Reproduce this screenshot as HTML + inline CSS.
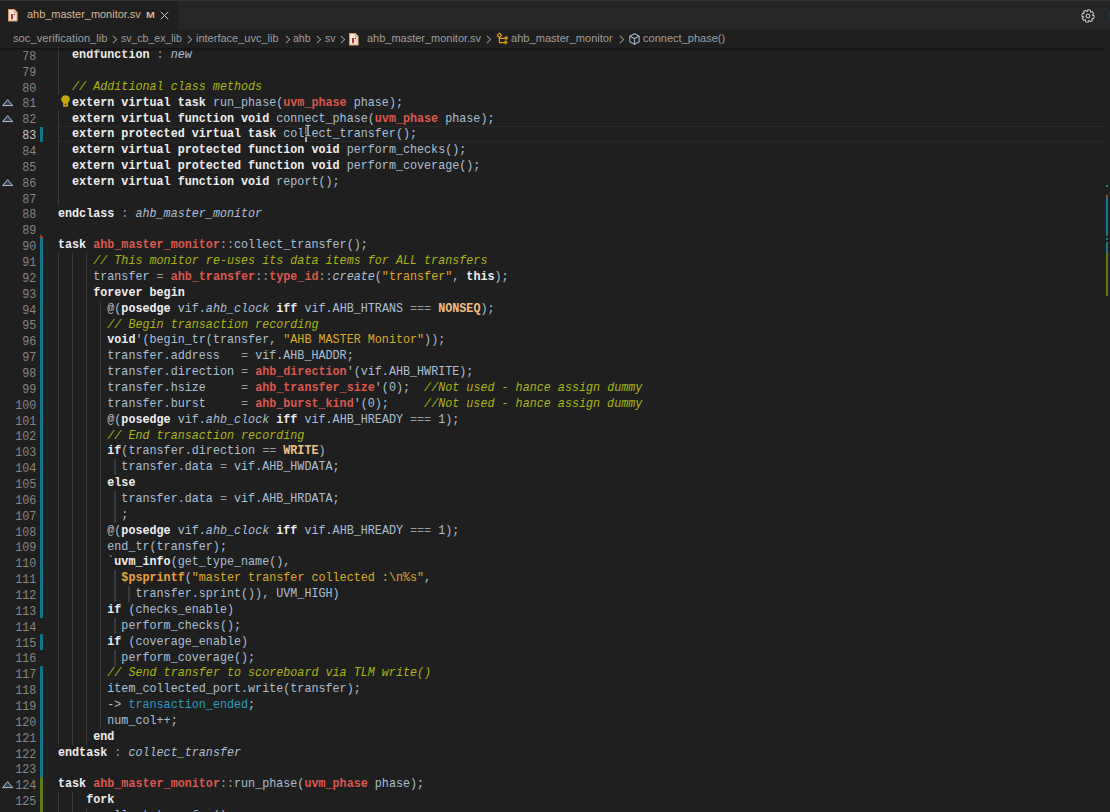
<!DOCTYPE html>
<html><head><meta charset="utf-8"><style>
*{margin:0;padding:0;box-sizing:border-box}
html,body{width:1110px;height:812px;overflow:hidden;background:#1f1f1f}
body{position:relative;font-family:"Liberation Sans",sans-serif}
.a{position:absolute}
svg{display:block}
#tabs{left:0;top:0;width:1110px;height:29.85px;background:#262626}
#tabtop{left:0;top:0;width:1110px;height:1.2px;background:#333333}
#tab{left:0;top:1.2px;width:177.9px;height:28.65px;background:#1f1f1f}
.ui{font-family:"Liberation Sans",sans-serif;font-size:11.2px;line-height:14px;height:14px;white-space:pre}
.tt{color:#dcb68c}
.bc{color:#9e9e9e}
#bcbar{left:0;top:29.85px;width:1110px;height:17.95px;background:#1f1f1f}
#shadow{left:0;top:47.8px;width:1105px;height:4.5px;background:linear-gradient(#121212,rgba(18,18,18,0.55) 35%,rgba(31,31,31,0))}
.ln{left:0;width:39.6px;text-align:right;transform-origin:0 0;transform:scaleX(0.9167);font-family:"Liberation Mono",monospace;font-size:12.8px;color:#858585;line-height:15.855px;height:15.855px;white-space:pre}
.cl{left:58px;transform-origin:0 0;transform:scaleX(0.9167);font-family:"Liberation Mono",monospace;font-size:12.8px;line-height:15.855px;height:15.855px;white-space:pre;color:#abbfd4}
.k{color:#eeeeee;font-weight:bold}
.t{color:#d9584c;font-weight:bold}
.c{color:#a8b514;font-style:italic}
.s{color:#dcab24}
.n{color:#efc086;font-weight:bold}
.f{color:#e9a23b;font-weight:bold}
.e{color:#2a9cbd}
.o{color:#9b9b9b}
.it{font-style:italic}
.g{width:1.2px;background:#3a3a3a}
.bar{left:39.9px;width:3.2px;background:#12738d}
.grn{left:39.9px;width:3.2px;background:#5e7a17}
.ov{left:1106.2px;width:2.2px}
</style></head><body>

<div class="a" id="tabs"></div><div class="a" id="tabtop"></div><div class="a" id="tab"></div>
<div class="a " style="left:8.1px;top:8.9px;width:10px;height:13px"><svg width="10" height="13" viewBox="0 0 10 13"><path d="M0.55 0.55 H6.3 L9.1 3.35 V12.0 H0.55 Z" fill="#f1e9d9" stroke="#d69b62" stroke-width="1.05"/><path d="M6.2 0.7 V3.4 H9.0" fill="#e7c9a0" stroke="#d69b62" stroke-width="0.7"/><path d="M2.9 5.0 L4.8 5.0 L5.1 10.2 L3.1 10.2 Z" fill="#b8262b"/><circle cx="6.4" cy="5.6" r="0.75" fill="#b8262b"/><path d="M4.6 8.6 L6.2 7.0" stroke="#c89a80" stroke-width="0.6"/></svg></div>
<div class="a ui tt" style="left:26.5px;top:7.3px;transform-origin:0 0;transform:scaleX(0.9786)">ahb_master_monitor.sv</div>
<div class="a ui tt" style="left:145.6px;top:8.0px;font-size:9.8px;font-weight:bold;transform-origin:0 0;transform:scaleX(1.08)">M</div>
<div class="a " style="left:160px;top:11.2px;width:9px;height:9px"><svg width="9" height="9" viewBox="0 0 9 9"><path d="M0.8 0.8 L8.2 8.2 M8.2 0.8 L0.8 8.2" stroke="#c6c6c6" stroke-width="1.0"/></svg></div>
<div class="a " style="left:1079.7px;top:7.5px;width:16px;height:16px;transform:rotate(11deg)"><svg width="16" height="16" viewBox="-8 -8 16 16"><g fill="none" stroke="#c5c5c5" stroke-width="1.0" stroke-linejoin="round"><path d="M4.31,-1.62 L6.05,-1.35 L6.05,1.35 L4.31,1.62 L4.19,1.90 L5.24,3.32 L3.32,5.24 L1.90,4.19 L1.62,4.31 L1.35,6.05 L-1.35,6.05 L-1.62,4.31 L-1.90,4.19 L-3.32,5.24 L-5.24,3.32 L-4.19,1.90 L-4.31,1.62 L-6.05,1.35 L-6.05,-1.35 L-4.31,-1.62 L-4.19,-1.90 L-5.24,-3.32 L-3.32,-5.24 L-1.90,-4.19 L-1.62,-4.31 L-1.35,-6.05 L1.35,-6.05 L1.62,-4.31 L1.90,-4.19 L3.32,-5.24 L5.24,-3.32 L4.19,-1.90 Z"/><circle cx="0" cy="0" r="1.9"/></g></svg></div>
<div class="a " style="left:1108.8px;top:11px;width:1.2px;height:9px;background:#203848"></div>
<div class="a" id="bcbar"></div>
<div class="a ui bc" style="left:13.0px;top:31.45px;transform-origin:0 0;transform:scaleX(1.0000)">soc_verification_lib</div>
<div class="a ui bc" style="left:120.8px;top:31.45px;transform-origin:0 0;transform:scaleX(0.9400)">sv_cb_ex_lib</div>
<div class="a ui bc" style="left:196.2px;top:31.45px;transform-origin:0 0;transform:scaleX(0.9833)">interface_uvc_lib</div>
<div class="a ui bc" style="left:292.9px;top:31.45px;transform-origin:0 0;transform:scaleX(0.9368)">ahb</div>
<div class="a ui bc" style="left:324.5px;top:31.45px;transform-origin:0 0;transform:scaleX(0.9273)">sv</div>
<div class="a ui bc" style="left:366.8px;top:31.45px;transform-origin:0 0;transform:scaleX(0.9812)">ahb_master_monitor.sv</div>
<div class="a ui bc" style="left:510.8px;top:31.45px;transform-origin:0 0;transform:scaleX(0.9913)">ahb_master_monitor</div>
<div class="a ui bc" style="left:643.1px;top:31.45px;transform-origin:0 0;transform:scaleX(0.9855)">connect_phase()</div>
<div class="a " style="left:112.2px;top:34.5px;width:6px;height:9px"><svg width="6" height="9" viewBox="0 0 6 9"><path d="M0.9 0.8 L4.6 4.5 L0.9 8.2" fill="none" stroke="#959595" stroke-width="1.05"/></svg></div>
<div class="a " style="left:186.6px;top:34.5px;width:6px;height:9px"><svg width="6" height="9" viewBox="0 0 6 9"><path d="M0.9 0.8 L4.6 4.5 L0.9 8.2" fill="none" stroke="#959595" stroke-width="1.05"/></svg></div>
<div class="a " style="left:284.6px;top:34.5px;width:6px;height:9px"><svg width="6" height="9" viewBox="0 0 6 9"><path d="M0.9 0.8 L4.6 4.5 L0.9 8.2" fill="none" stroke="#959595" stroke-width="1.05"/></svg></div>
<div class="a " style="left:315.8px;top:34.5px;width:6px;height:9px"><svg width="6" height="9" viewBox="0 0 6 9"><path d="M0.9 0.8 L4.6 4.5 L0.9 8.2" fill="none" stroke="#959595" stroke-width="1.05"/></svg></div>
<div class="a " style="left:339.8px;top:34.5px;width:6px;height:9px"><svg width="6" height="9" viewBox="0 0 6 9"><path d="M0.9 0.8 L4.6 4.5 L0.9 8.2" fill="none" stroke="#959595" stroke-width="1.05"/></svg></div>
<div class="a " style="left:486.0px;top:34.5px;width:6px;height:9px"><svg width="6" height="9" viewBox="0 0 6 9"><path d="M0.9 0.8 L4.6 4.5 L0.9 8.2" fill="none" stroke="#959595" stroke-width="1.05"/></svg></div>
<div class="a " style="left:618.6px;top:34.5px;width:6px;height:9px"><svg width="6" height="9" viewBox="0 0 6 9"><path d="M0.9 0.8 L4.6 4.5 L0.9 8.2" fill="none" stroke="#959595" stroke-width="1.05"/></svg></div>
<div class="a " style="left:348.6px;top:32.6px;width:10px;height:13px"><svg width="10" height="13" viewBox="0 0 10 13"><path d="M0.55 0.55 H6.3 L9.1 3.35 V12.0 H0.55 Z" fill="#f1e9d9" stroke="#d69b62" stroke-width="1.05"/><path d="M6.2 0.7 V3.4 H9.0" fill="#e7c9a0" stroke="#d69b62" stroke-width="0.7"/><path d="M2.9 5.0 L4.8 5.0 L5.1 10.2 L3.1 10.2 Z" fill="#b8262b"/><circle cx="6.4" cy="5.6" r="0.75" fill="#b8262b"/><path d="M4.6 8.6 L6.2 7.0" stroke="#c89a80" stroke-width="0.6"/></svg></div>
<div class="a " style="left:492px;top:30px;width:16px;height:16px"><svg width="16" height="16" viewBox="0 0 16 16"><g fill="none" stroke="#e3a00f" stroke-width="1.15" stroke-linejoin="round"><path d="M7.5 3.2 L9.6 5.3 L7.4 7.5 L5.2 5.6 Z"/><path d="M7.4 7.5 V12.6 H12.6 M7.9 8.3 H13.0"/><path d="M14.2 6.6 L15.6 7.9 L14.2 9.3 L12.8 7.9 Z"/><path d="M13.7 11.0 L15.1 12.4 L13.7 13.8 L12.3 12.4 Z"/></g></svg></div>
<div class="a " style="left:628.9px;top:33.0px;width:11px;height:12px"><svg width="11" height="12" viewBox="0 0 11 12"><g fill="none" stroke="#a3b2c6" stroke-width="1.1" stroke-linejoin="round"><path d="M5.5 0.8 L10.2 3.2 L10.2 8.8 L5.5 11.2 L0.8 8.8 L0.8 3.2 Z"/><path d="M0.8 3.2 L5.5 5.6 L10.2 3.2 M5.5 5.6 L5.5 11.2"/></g></svg></div>
<div class="a " style="left:58.5px;top:126.48px;width:1046.5px;height:15.86px;border-top:1.67px solid #282828;border-bottom:1.67px solid #282828"></div>
<div class="a g" style="left:58.00px;top:47.20px;height:15.96px"></div>
<div class="a g" style="left:58.00px;top:63.06px;height:15.96px"></div>
<div class="a g" style="left:58.00px;top:78.91px;height:15.96px"></div>
<div class="a g" style="left:58.00px;top:110.62px;height:15.96px"></div>
<div class="a g" style="left:58.00px;top:126.48px;height:15.96px"></div>
<div class="a g" style="left:58.00px;top:142.33px;height:15.96px"></div>
<div class="a g" style="left:58.00px;top:158.19px;height:15.96px"></div>
<div class="a g" style="left:58.00px;top:174.04px;height:15.96px"></div>
<div class="a g" style="left:58.00px;top:189.89px;height:15.96px"></div>
<div class="a g" style="left:58.00px;top:253.31px;height:15.96px"></div>
<div class="a g" style="left:72.08px;top:253.31px;height:15.96px"></div>
<div class="a g" style="left:86.16px;top:253.31px;height:15.96px"></div>
<div class="a g" style="left:58.00px;top:269.17px;height:15.96px"></div>
<div class="a g" style="left:72.08px;top:269.17px;height:15.96px"></div>
<div class="a g" style="left:86.16px;top:269.17px;height:15.96px"></div>
<div class="a g" style="left:58.00px;top:285.03px;height:15.96px"></div>
<div class="a g" style="left:72.08px;top:285.03px;height:15.96px"></div>
<div class="a g" style="left:86.16px;top:285.03px;height:15.96px"></div>
<div class="a g" style="left:58.00px;top:300.88px;height:15.96px"></div>
<div class="a g" style="left:72.08px;top:300.88px;height:15.96px"></div>
<div class="a g" style="left:86.16px;top:300.88px;height:15.96px"></div>
<div class="a g" style="left:100.24px;top:300.88px;height:15.96px"></div>
<div class="a g" style="left:58.00px;top:316.74px;height:15.96px"></div>
<div class="a g" style="left:72.08px;top:316.74px;height:15.96px"></div>
<div class="a g" style="left:86.16px;top:316.74px;height:15.96px"></div>
<div class="a g" style="left:100.24px;top:316.74px;height:15.96px"></div>
<div class="a g" style="left:58.00px;top:332.59px;height:15.96px"></div>
<div class="a g" style="left:72.08px;top:332.59px;height:15.96px"></div>
<div class="a g" style="left:86.16px;top:332.59px;height:15.96px"></div>
<div class="a g" style="left:100.24px;top:332.59px;height:15.96px"></div>
<div class="a g" style="left:58.00px;top:348.44px;height:15.96px"></div>
<div class="a g" style="left:72.08px;top:348.44px;height:15.96px"></div>
<div class="a g" style="left:86.16px;top:348.44px;height:15.96px"></div>
<div class="a g" style="left:100.24px;top:348.44px;height:15.96px"></div>
<div class="a g" style="left:58.00px;top:364.30px;height:15.96px"></div>
<div class="a g" style="left:72.08px;top:364.30px;height:15.96px"></div>
<div class="a g" style="left:86.16px;top:364.30px;height:15.96px"></div>
<div class="a g" style="left:100.24px;top:364.30px;height:15.96px"></div>
<div class="a g" style="left:58.00px;top:380.15px;height:15.96px"></div>
<div class="a g" style="left:72.08px;top:380.15px;height:15.96px"></div>
<div class="a g" style="left:86.16px;top:380.15px;height:15.96px"></div>
<div class="a g" style="left:100.24px;top:380.15px;height:15.96px"></div>
<div class="a g" style="left:58.00px;top:396.01px;height:15.96px"></div>
<div class="a g" style="left:72.08px;top:396.01px;height:15.96px"></div>
<div class="a g" style="left:86.16px;top:396.01px;height:15.96px"></div>
<div class="a g" style="left:100.24px;top:396.01px;height:15.96px"></div>
<div class="a g" style="left:58.00px;top:411.87px;height:15.96px"></div>
<div class="a g" style="left:72.08px;top:411.87px;height:15.96px"></div>
<div class="a g" style="left:86.16px;top:411.87px;height:15.96px"></div>
<div class="a g" style="left:100.24px;top:411.87px;height:15.96px"></div>
<div class="a g" style="left:58.00px;top:427.72px;height:15.96px"></div>
<div class="a g" style="left:72.08px;top:427.72px;height:15.96px"></div>
<div class="a g" style="left:86.16px;top:427.72px;height:15.96px"></div>
<div class="a g" style="left:100.24px;top:427.72px;height:15.96px"></div>
<div class="a g" style="left:58.00px;top:443.57px;height:15.96px"></div>
<div class="a g" style="left:72.08px;top:443.57px;height:15.96px"></div>
<div class="a g" style="left:86.16px;top:443.57px;height:15.96px"></div>
<div class="a g" style="left:100.24px;top:443.57px;height:15.96px"></div>
<div class="a g" style="left:58.00px;top:459.43px;height:15.96px"></div>
<div class="a g" style="left:72.08px;top:459.43px;height:15.96px"></div>
<div class="a g" style="left:86.16px;top:459.43px;height:15.96px"></div>
<div class="a g" style="left:100.24px;top:459.43px;height:15.96px"></div>
<div class="a g" style="left:114.32px;top:459.43px;height:15.96px"></div>
<div class="a g" style="left:58.00px;top:475.29px;height:15.96px"></div>
<div class="a g" style="left:72.08px;top:475.29px;height:15.96px"></div>
<div class="a g" style="left:86.16px;top:475.29px;height:15.96px"></div>
<div class="a g" style="left:100.24px;top:475.29px;height:15.96px"></div>
<div class="a g" style="left:58.00px;top:491.14px;height:15.96px"></div>
<div class="a g" style="left:72.08px;top:491.14px;height:15.96px"></div>
<div class="a g" style="left:86.16px;top:491.14px;height:15.96px"></div>
<div class="a g" style="left:100.24px;top:491.14px;height:15.96px"></div>
<div class="a g" style="left:114.32px;top:491.14px;height:15.96px"></div>
<div class="a g" style="left:58.00px;top:507.00px;height:15.96px"></div>
<div class="a g" style="left:72.08px;top:507.00px;height:15.96px"></div>
<div class="a g" style="left:86.16px;top:507.00px;height:15.96px"></div>
<div class="a g" style="left:100.24px;top:507.00px;height:15.96px"></div>
<div class="a g" style="left:114.32px;top:507.00px;height:15.96px"></div>
<div class="a g" style="left:58.00px;top:522.85px;height:15.96px"></div>
<div class="a g" style="left:72.08px;top:522.85px;height:15.96px"></div>
<div class="a g" style="left:86.16px;top:522.85px;height:15.96px"></div>
<div class="a g" style="left:100.24px;top:522.85px;height:15.96px"></div>
<div class="a g" style="left:58.00px;top:538.71px;height:15.96px"></div>
<div class="a g" style="left:72.08px;top:538.71px;height:15.96px"></div>
<div class="a g" style="left:86.16px;top:538.71px;height:15.96px"></div>
<div class="a g" style="left:100.24px;top:538.71px;height:15.96px"></div>
<div class="a g" style="left:58.00px;top:554.56px;height:15.96px"></div>
<div class="a g" style="left:72.08px;top:554.56px;height:15.96px"></div>
<div class="a g" style="left:86.16px;top:554.56px;height:15.96px"></div>
<div class="a g" style="left:100.24px;top:554.56px;height:15.96px"></div>
<div class="a g" style="left:58.00px;top:570.42px;height:15.96px"></div>
<div class="a g" style="left:72.08px;top:570.42px;height:15.96px"></div>
<div class="a g" style="left:86.16px;top:570.42px;height:15.96px"></div>
<div class="a g" style="left:100.24px;top:570.42px;height:15.96px"></div>
<div class="a g" style="left:114.32px;top:570.42px;height:15.96px"></div>
<div class="a g" style="left:58.00px;top:586.27px;height:15.96px"></div>
<div class="a g" style="left:72.08px;top:586.27px;height:15.96px"></div>
<div class="a g" style="left:86.16px;top:586.27px;height:15.96px"></div>
<div class="a g" style="left:100.24px;top:586.27px;height:15.96px"></div>
<div class="a g" style="left:114.32px;top:586.27px;height:15.96px"></div>
<div class="a g" style="left:128.40px;top:586.27px;height:15.96px"></div>
<div class="a g" style="left:58.00px;top:602.13px;height:15.96px"></div>
<div class="a g" style="left:72.08px;top:602.13px;height:15.96px"></div>
<div class="a g" style="left:86.16px;top:602.13px;height:15.96px"></div>
<div class="a g" style="left:100.24px;top:602.13px;height:15.96px"></div>
<div class="a g" style="left:58.00px;top:617.98px;height:15.96px"></div>
<div class="a g" style="left:72.08px;top:617.98px;height:15.96px"></div>
<div class="a g" style="left:86.16px;top:617.98px;height:15.96px"></div>
<div class="a g" style="left:100.24px;top:617.98px;height:15.96px"></div>
<div class="a g" style="left:114.32px;top:617.98px;height:15.96px"></div>
<div class="a g" style="left:58.00px;top:633.84px;height:15.96px"></div>
<div class="a g" style="left:72.08px;top:633.84px;height:15.96px"></div>
<div class="a g" style="left:86.16px;top:633.84px;height:15.96px"></div>
<div class="a g" style="left:100.24px;top:633.84px;height:15.96px"></div>
<div class="a g" style="left:58.00px;top:649.69px;height:15.96px"></div>
<div class="a g" style="left:72.08px;top:649.69px;height:15.96px"></div>
<div class="a g" style="left:86.16px;top:649.69px;height:15.96px"></div>
<div class="a g" style="left:100.24px;top:649.69px;height:15.96px"></div>
<div class="a g" style="left:114.32px;top:649.69px;height:15.96px"></div>
<div class="a g" style="left:58.00px;top:665.55px;height:15.96px"></div>
<div class="a g" style="left:72.08px;top:665.55px;height:15.96px"></div>
<div class="a g" style="left:86.16px;top:665.55px;height:15.96px"></div>
<div class="a g" style="left:100.24px;top:665.55px;height:15.96px"></div>
<div class="a g" style="left:58.00px;top:681.40px;height:15.96px"></div>
<div class="a g" style="left:72.08px;top:681.40px;height:15.96px"></div>
<div class="a g" style="left:86.16px;top:681.40px;height:15.96px"></div>
<div class="a g" style="left:100.24px;top:681.40px;height:15.96px"></div>
<div class="a g" style="left:58.00px;top:697.26px;height:15.96px"></div>
<div class="a g" style="left:72.08px;top:697.26px;height:15.96px"></div>
<div class="a g" style="left:86.16px;top:697.26px;height:15.96px"></div>
<div class="a g" style="left:100.24px;top:697.26px;height:15.96px"></div>
<div class="a g" style="left:58.00px;top:713.11px;height:15.96px"></div>
<div class="a g" style="left:72.08px;top:713.11px;height:15.96px"></div>
<div class="a g" style="left:86.16px;top:713.11px;height:15.96px"></div>
<div class="a g" style="left:100.24px;top:713.11px;height:15.96px"></div>
<div class="a g" style="left:58.00px;top:728.97px;height:15.96px"></div>
<div class="a g" style="left:72.08px;top:728.97px;height:15.96px"></div>
<div class="a g" style="left:86.16px;top:728.97px;height:15.96px"></div>
<div class="a g" style="left:58.00px;top:792.39px;height:15.96px"></div>
<div class="a g" style="left:72.08px;top:792.39px;height:15.96px"></div>
<div class="a g" style="left:58.00px;top:808.24px;height:15.96px"></div>
<div class="a g" style="left:72.08px;top:808.24px;height:15.96px"></div>
<div class="a g" style="left:86.16px;top:808.24px;height:15.96px"></div>
<div class="a bar" style="top:126.88px;height:15.35px"></div>
<div class="a bar" style="top:237.86px;height:173.91px"></div>
<div class="a bar" style="top:412.26px;height:205.62px"></div>
<div class="a bar" style="top:634.24px;height:15.36px"></div>
<div class="a bar" style="top:665.95px;height:110.59px"></div>
<div class="a grn" style="top:776.53px;height:63.42px"></div>
<div class="a " style="left:40px;top:233.66px;width:4.2px;height:4.2px"><svg width="4.2" height="4.2" viewBox="0 0 4 4"><path d="M0 0 L0 4 L4 4 Z" fill="#a3402c"/></svg></div>
<div class="a ln" style="top:48.90px">78</div>
<div class="a cl" style="top:47.10px">  <span class="k">endfunction</span><span class="o"> : </span><span class="it">new</span></div>
<div class="a ln" style="top:64.76px">79</div>
<div class="a cl" style="top:62.96px"></div>
<div class="a ln" style="top:80.61px">80</div>
<div class="a cl" style="top:78.81px">  <span class="c">// Additional class methods</span></div>
<div class="a ln" style="top:96.47px">81</div>
<div class="a cl" style="top:94.67px">  <span class="k">extern virtual task</span> run_phase(<span class="t">uvm_phase</span> phase);</div>
<div class="a ln" style="top:112.32px">82</div>
<div class="a cl" style="top:110.52px">  <span class="k">extern virtual function void</span> connect_phase(<span class="t">uvm_phase</span> phase);</div>
<div class="a ln" style="top:128.18px;color:#c6c6c6">83</div>
<div class="a cl" style="top:126.38px">  <span class="k">extern protected virtual task</span> collect_transfer();</div>
<div class="a ln" style="top:144.03px">84</div>
<div class="a cl" style="top:142.23px">  <span class="k">extern virtual protected function void</span> perform_checks();</div>
<div class="a ln" style="top:159.89px">85</div>
<div class="a cl" style="top:158.09px">  <span class="k">extern virtual protected function void</span> perform_coverage();</div>
<div class="a ln" style="top:175.74px">86</div>
<div class="a cl" style="top:173.94px">  <span class="k">extern virtual function void</span> report();</div>
<div class="a ln" style="top:191.59px">87</div>
<div class="a cl" style="top:189.79px"></div>
<div class="a ln" style="top:207.45px">88</div>
<div class="a cl" style="top:205.65px"><span class="k">endclass</span><span class="o"> : </span><span class="it">ahb_master_monitor</span></div>
<div class="a ln" style="top:223.31px">89</div>
<div class="a cl" style="top:221.51px"></div>
<div class="a ln" style="top:239.16px">90</div>
<div class="a cl" style="top:237.36px"><span class="k">task</span> <span class="t">ahb_master_monitor</span><span class="o">::</span>collect_transfer();</div>
<div class="a ln" style="top:255.02px">91</div>
<div class="a cl" style="top:253.22px">     <span class="c">// This monitor re-uses its data items for ALL transfers</span></div>
<div class="a ln" style="top:270.87px">92</div>
<div class="a cl" style="top:269.07px">     transfer <span class="o">=</span> <span class="t">ahb_transfer</span><span class="o">::</span><span class="t">type_id</span><span class="o">::</span><span class="it">create</span>(<span class="s">&quot;transfer&quot;</span>, <span class="k">this</span>);</div>
<div class="a ln" style="top:286.73px">93</div>
<div class="a cl" style="top:284.93px">     <span class="k">forever begin</span></div>
<div class="a ln" style="top:302.58px">94</div>
<div class="a cl" style="top:300.78px">       @(<span class="k">posedge</span> vif.<span class="it">ahb_clock</span> <span class="k">iff</span> vif.AHB_HTRANS <span class="o">===</span> <span class="n">NONSEQ</span>);</div>
<div class="a ln" style="top:318.44px">95</div>
<div class="a cl" style="top:316.63px">       <span class="c">// Begin transaction recording</span></div>
<div class="a ln" style="top:334.29px">96</div>
<div class="a cl" style="top:332.49px">       <span class="k">void</span>&#x27;(begin_tr(transfer, <span class="s">&quot;AHB MASTER Monitor&quot;</span>));</div>
<div class="a ln" style="top:350.14px">97</div>
<div class="a cl" style="top:348.34px">       transfer.address   <span class="o">=</span> vif.AHB_HADDR;</div>
<div class="a ln" style="top:366.00px">98</div>
<div class="a cl" style="top:364.20px">       transfer.direction <span class="o">=</span> <span class="t">ahb_direction</span>&#x27;(vif.AHB_HWRITE);</div>
<div class="a ln" style="top:381.85px">99</div>
<div class="a cl" style="top:380.05px">       transfer.hsize     <span class="o">=</span> <span class="t">ahb_transfer_size</span>&#x27;(0);  <span class="c">//Not used - hance assign dummy</span></div>
<div class="a ln" style="top:397.71px">100</div>
<div class="a cl" style="top:395.91px">       transfer.burst     <span class="o">=</span> <span class="t">ahb_burst_kind</span>&#x27;(0);     <span class="c">//Not used - hance assign dummy</span></div>
<div class="a ln" style="top:413.56px">101</div>
<div class="a cl" style="top:411.76px">       @(<span class="k">posedge</span> vif.<span class="it">ahb_clock</span> <span class="k">iff</span> vif.AHB_HREADY <span class="o">===</span> 1);</div>
<div class="a ln" style="top:429.42px">102</div>
<div class="a cl" style="top:427.62px">       <span class="c">// End transaction recording</span></div>
<div class="a ln" style="top:445.27px">103</div>
<div class="a cl" style="top:443.47px">       <span class="k">if</span>(transfer.direction <span class="o">==</span> <span class="n">WRITE</span>)</div>
<div class="a ln" style="top:461.13px">104</div>
<div class="a cl" style="top:459.33px">         transfer.data <span class="o">=</span> vif.AHB_HWDATA;</div>
<div class="a ln" style="top:476.99px">105</div>
<div class="a cl" style="top:475.19px">       <span class="k">else</span></div>
<div class="a ln" style="top:492.84px">106</div>
<div class="a cl" style="top:491.04px">         transfer.data <span class="o">=</span> vif.AHB_HRDATA;</div>
<div class="a ln" style="top:508.69px">107</div>
<div class="a cl" style="top:506.89px">         ;</div>
<div class="a ln" style="top:524.55px">108</div>
<div class="a cl" style="top:522.75px">       @(<span class="k">posedge</span> vif.<span class="it">ahb_clock</span> <span class="k">iff</span> vif.AHB_HREADY <span class="o">===</span> 1);</div>
<div class="a ln" style="top:540.40px">109</div>
<div class="a cl" style="top:538.61px">       end_tr(transfer);</div>
<div class="a ln" style="top:556.26px">110</div>
<div class="a cl" style="top:554.46px">       `<span class="k">uvm_info</span>(get_type_name(),</div>
<div class="a ln" style="top:572.12px">111</div>
<div class="a cl" style="top:570.32px">         <span class="f">$psprintf</span>(<span class="s">&quot;master transfer collected :\n%s&quot;</span>,</div>
<div class="a ln" style="top:587.97px">112</div>
<div class="a cl" style="top:586.17px">           transfer.sprint()), UVM_HIGH)</div>
<div class="a ln" style="top:603.83px">113</div>
<div class="a cl" style="top:602.03px">       <span class="k">if</span> (checks_enable)</div>
<div class="a ln" style="top:619.68px">114</div>
<div class="a cl" style="top:617.88px">         perform_checks();</div>
<div class="a ln" style="top:635.53px">115</div>
<div class="a cl" style="top:633.74px">       <span class="k">if</span> (coverage_enable)</div>
<div class="a ln" style="top:651.39px">116</div>
<div class="a cl" style="top:649.59px">         perform_coverage();</div>
<div class="a ln" style="top:667.25px">117</div>
<div class="a cl" style="top:665.45px">       <span class="c">// Send transfer to scoreboard via TLM write()</span></div>
<div class="a ln" style="top:683.10px">118</div>
<div class="a cl" style="top:681.30px">       item_collected_port.write(transfer);</div>
<div class="a ln" style="top:698.96px">119</div>
<div class="a cl" style="top:697.16px">       -&gt; <span class="e">transaction_ended</span>;</div>
<div class="a ln" style="top:714.81px">120</div>
<div class="a cl" style="top:713.01px">       num_col++;</div>
<div class="a ln" style="top:730.66px">121</div>
<div class="a cl" style="top:728.87px">     <span class="k">end</span></div>
<div class="a ln" style="top:746.52px">122</div>
<div class="a cl" style="top:744.72px"><span class="k">endtask</span><span class="o"> : </span><span class="it">collect_transfer</span></div>
<div class="a ln" style="top:762.38px">123</div>
<div class="a cl" style="top:760.58px"></div>
<div class="a ln" style="top:778.23px">124</div>
<div class="a cl" style="top:776.43px"><span class="k">task</span> <span class="t">ahb_master_monitor</span><span class="o">::</span>run_phase(<span class="t">uvm_phase</span> phase);</div>
<div class="a ln" style="top:794.09px">125</div>
<div class="a cl" style="top:792.29px">    <span class="k">fork</span></div>
<div class="a ln" style="top:809.94px">126</div>
<div class="a cl" style="top:808.14px">      collect_transfer();</div>
<div class="a " style="left:1.8px;top:99.36px;width:11.4px;height:7.4px"><svg width="11.4" height="7.4" viewBox="0 0 11.4 7.4"><path d="M5.6 0.7 L10.7 6.6 L0.7 6.6 Z" fill="#2f4358" stroke="#bfc3c8" stroke-width="1.0" stroke-linejoin="round"/></svg></div>
<div class="a " style="left:1.8px;top:115.22px;width:11.4px;height:7.4px"><svg width="11.4" height="7.4" viewBox="0 0 11.4 7.4"><path d="M5.6 0.7 L10.7 6.6 L0.7 6.6 Z" fill="#2f4358" stroke="#bfc3c8" stroke-width="1.0" stroke-linejoin="round"/></svg></div>
<div class="a " style="left:1.8px;top:178.64px;width:11.4px;height:7.4px"><svg width="11.4" height="7.4" viewBox="0 0 11.4 7.4"><path d="M5.6 0.7 L10.7 6.6 L0.7 6.6 Z" fill="#2f4358" stroke="#bfc3c8" stroke-width="1.0" stroke-linejoin="round"/></svg></div>
<div class="a " style="left:1.8px;top:781.13px;width:11.4px;height:7.4px"><svg width="11.4" height="7.4" viewBox="0 0 11.4 7.4"><path d="M5.6 0.7 L10.7 6.6 L0.7 6.6 Z" fill="#2f4358" stroke="#bfc3c8" stroke-width="1.0" stroke-linejoin="round"/></svg></div>
<div class="a " style="left:60.8px;top:95.2px;width:10px;height:12px"><svg width="10" height="12" viewBox="0 0 10 12"><path d="M4.5 0.2 C7.1 0.2 8.9 2.0 8.9 4.3 C8.9 5.9 8.0 6.9 7.0 7.9 L6.9 11.7 L2.2 11.7 L2.1 7.9 C1.1 6.9 0.2 5.9 0.2 4.3 C0.2 2.0 2.0 0.2 4.5 0.2 Z" fill="#c4a60e"/><circle cx="4.5" cy="9.4" r="0.75" fill="#1f1f1f"/></svg></div>
<div class="a " style="left:305.40px;top:127.48px;width:1.2px;height:14.66px;background:#aeafad"></div>
<div class="a " style="left:304.2px;top:123.6px;width:8px;height:15px"><svg width="8" height="15" viewBox="0 0 8 15"><path d="M0.6 0.6 H7.2 V2.0 H5.6 V11.0 H7.2 V12.6 H0.6 V11.0 H2.2 V2.0 H0.6 Z" fill="#8e949a" stroke="#0a0a0a" stroke-width="0.9"/><path d="M1.2 1.3 H6.6" stroke="#d0d0d0" stroke-width="0.8"/><path d="M1.2 11.8 H6.6" stroke="#c8b090" stroke-width="0.8"/></svg></div>
<div class="a ov" style="top:184.80px;height:2.20px;background:#15778f"></div>
<div class="a ov" style="top:194.90px;height:1.70px;background:#a3402c"></div>
<div class="a ov" style="top:196.60px;height:39.70px;background:#15778f"></div>
<div class="a ov" style="top:238.30px;height:1.50px;background:#15778f"></div>
<div class="a ov" style="top:241.70px;height:11.40px;background:#15778f"></div>
<div class="a ov" style="top:253.10px;height:43.30px;background:#5e7a17"></div>
<div class="a" id="shadow"></div>
</body></html>
